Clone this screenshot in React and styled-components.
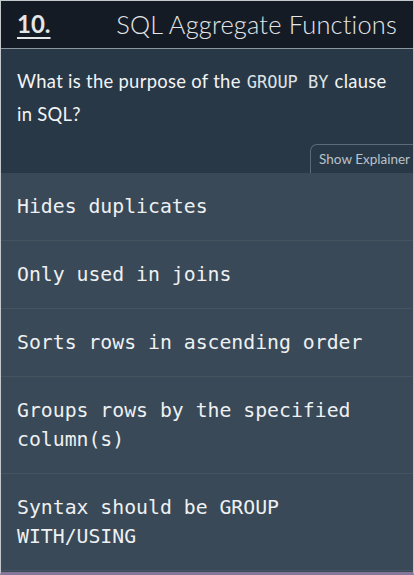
import React from 'react';
import styled, { createGlobalStyle } from 'styled-components';

const GlobalStyle = createGlobalStyle`
  html, body {
    margin:0;
    padding:0;
    background:#394957;
  }
  * {
    box-sizing:border-box;
  }
`;

const Frame = styled.div`
  display:flex;
  flex-direction:column;
  width:414px;
  height:575px;
  overflow:hidden;
  border:1px solid #c4c8cc;
  border-bottom:3px solid #85769a;
  background:#394957;
`;

const Header = styled.div`
  display:flex;
  align-items:center;
  justify-content:space-between;
  height:48px;
  padding:0 16px 2px 16px;
  background:#141b24;
  border-bottom:1px solid #8c969e;
  color:#e4e6e8;
  font-family:Lato, "Open Sans", sans-serif;
`;

const Number = styled.span`
  font-size:24px;
  font-weight:700;
  text-decoration:underline;
  text-underline-offset:4px;
  text-decoration-thickness:2px;
`;

const Title = styled.span`
  font-size:25.4px;
  font-weight:300;
  letter-spacing:0.2px;
`;

const QuestionBox = styled.div`
  display:flex;
  flex-direction:column;
  background:#283846;
  padding:16px 0 0 16px;
`;

const Question = styled.p`
  margin:0;
  padding-right:20px;
  color:#f2f4f6;
  font-family:Lato, "Open Sans", sans-serif;
  font-size:18.4px;
  line-height:32px;
  letter-spacing:0.3px;
`;

const Code = styled.code`
  font-family:"DejaVu Sans Mono", monospace;
  font-size:17px;
  letter-spacing:0;
  color:#dfe3e6;
  margin:0 6px 0 6px;
`;

const ExplainerTab = styled.button`
  align-self:flex-end;
  margin-top:14px;
  height:29px;
  padding:0 3px 0 8px;
  background:#283846;
  border:1px solid #5c6b78;
  border-right:none;
  border-bottom:none;
  border-radius:7px 0 0 0;
  color:#b9c2ca;
  font-family:Lato, "Open Sans", sans-serif;
  font-size:13.5px;
  cursor:pointer;
`;

const Options = styled.ul`
  list-style:none;
  margin:0;
  padding:0;
`;

const Option = styled.li`
  padding:19px 16px;
  border-bottom:1px solid #45545f;
  color:#eef0f2;
  font-family:"DejaVu Sans Mono", monospace;
  font-size:19.8px;
  line-height:29px;
`;

const answers = [
  'Hides duplicates',
  'Only used in joins',
  'Sorts rows in ascending order',
  'Groups rows by the specified column(s)',
  'Syntax should be GROUP WITH/USING',
];

export default function App() {
  return (
    <>
      <GlobalStyle />
      <Frame>
        <Header>
          <Number>10.</Number>
          <Title>SQL Aggregate Functions</Title>
        </Header>
        <QuestionBox>
          <Question>
            What is the purpose of the<Code>GROUP BY</Code>clause in SQL?
          </Question>
          <ExplainerTab>Show Explainer</ExplainerTab>
        </QuestionBox>
        <Options>
          {answers.map((a, idx) => (
            <Option key={`answer_${idx}`}>{a}</Option>
          ))}
        </Options>
      </Frame>
    </>
  );
}
